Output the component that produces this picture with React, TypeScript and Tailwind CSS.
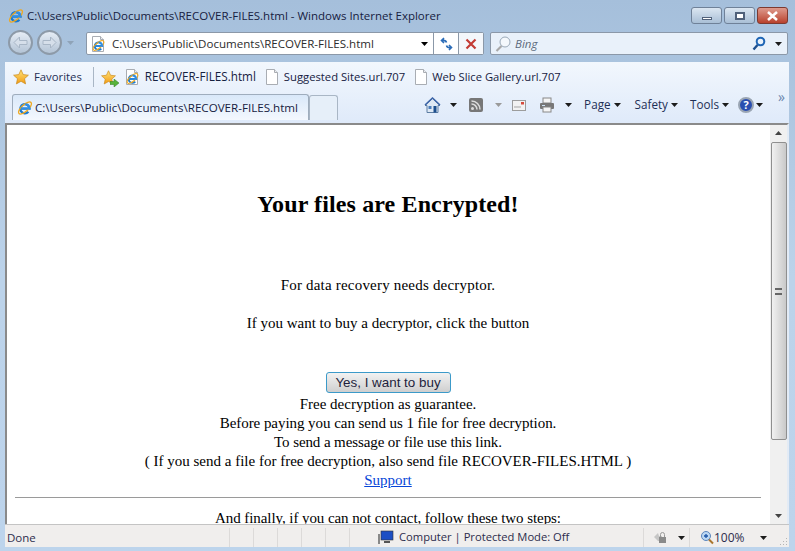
import React from 'react'

const IeLogo = ({ size = 16 }: { size?: number }) => (
  <svg width={size} height={size} viewBox="0 0 16 16" className="shrink-0">
    <path d="M3.800 8.600h8.700a4.600 4.600 0 1 0-1.100 3.200" fill="none" stroke="#1b7ad0" strokeWidth="2.300" />
    <ellipse cx="8" cy="8" rx="8.200" ry="3.300" transform="rotate(-42 8 8)" fill="none" stroke="#efa81f" strokeWidth="1.300" />
    <path d="M3.800 8.600h8.700a4.600 4.600 0 0 0-4.300-4.400" fill="none" stroke="#2f8fe6" strokeWidth="2" />
  </svg>
)

const PageIcon = ({ children }: { children?: React.ReactNode }) => (
  <span className="relative w-[14px] h-[16px] shrink-0">
    <svg width="14" height="16" viewBox="0 0 14 16">
      <path d="M1.500.5h8l3 3v12h-11z" fill="#fff" stroke="#a9adb3" />
      <path d="M9.500.5v3h3" fill="#eceef1" stroke="#a9adb3" />
    </svg>
    {children}
  </span>
)

const IePage = () => (
  <PageIcon>
    <span className="absolute left-[1px] top-[3px]"><IeLogo size={13} /></span>
  </PageIcon>
)

const Star = ({ size = 16 }: { size?: number }) => (
  <svg width={size} height={size} viewBox="0 0 16 16" className="shrink-0">
    <defs>
      <linearGradient id="starFill" x1="0" y1="0" x2="0" y2="1">
        <stop offset="0" stopColor="#ffe47a" />
        <stop offset="1" stopColor="#f29a12" />
      </linearGradient>
    </defs>
    <path d="M8 .8l2.200 4.800 5.200.6-3.900 3.500 1.100 5.200L8 12.300l-4.600 2.600 1.100-5.200L.6 6.200l5.200-.6z" fill="url(#starFill)" stroke="#c98a1d" strokeWidth=".7" />
  </svg>
)

const Caret = ({ color = '#1c1c1c' }: { color?: string }) => (
  <svg width="8" height="4" viewBox="0 0 8 4" className="shrink-0">
    <path d="M0 0h7L3.500 4z" fill={color} />
  </svg>
)

const NavCircle = ({ flip }: { flip?: boolean }) => (
  <span className="w-[25px] h-[25px] rounded-full border-2 border-[#8d9aa8] bg-gradient-to-b from-[#e6edf5] to-[#b4c4d6] flex items-center justify-center">
    <svg width="15" height="13" viewBox="0 0 15 13" style={flip ? { transform: 'scaleX(-1)' } : undefined}>
      <path d="M1 6.500L6.500 1v3.500H14v4H6.500V12z" fill="#d6dfea" stroke="#a8b6c6" />
    </svg>
  </span>
)

const MenuItem = ({ label }: { label: string }) => (
  <span className="flex items-center gap-[3px] text-[11.7px] text-[#1e2f55]">
    {label}
    <Caret />
  </span>
)

const App = () => {
  return (
    <div className="w-[795px] h-[551px] overflow-hidden flex flex-col bg-gradient-to-b from-[#a5bfdb] via-[#bcd3ea] to-[#bdd4ec] font-['Open_Sans','Noto_Sans',sans-serif] text-[11.5px] text-[#1e2f55]">
      {/* title bar */}
      <div className="h-[30px] shrink-0 pl-[8px] pr-[7px] flex items-start">
        <div className="flex items-center gap-[3px] pt-[8px]">
          <IeLogo />
          <span className="leading-[16px] text-[#16213f]">C:\Users\Public\Documents\RECOVER-FILES.html - Windows Internet Explorer</span>
        </div>
        <div className="ml-auto flex gap-[2px] pt-[7px]">
          <span className="w-[31px] h-[17px] rounded-[3px] border border-[#6f8198] bg-gradient-to-b from-[#dbe6f1] to-[#a9bfd6] flex items-end justify-center pb-[3px]">
            <span className="w-[10px] h-[3px] bg-white border border-[#50617a]" />
          </span>
          <span className="w-[31px] h-[17px] rounded-[3px] border border-[#6f8198] bg-gradient-to-b from-[#dbe6f1] to-[#a9bfd6] flex items-center justify-center">
            <span className="w-[10px] h-[8px] border-2 border-[#50617a] bg-white" />
          </span>
          <span className="w-[31px] h-[17px] rounded-[3px] border border-[#7d3a30] bg-gradient-to-b from-[#dd9a8d] to-[#b8402c] flex items-center justify-center">
            <svg width="13" height="10" viewBox="0 0 13 10"><path d="M2 1l9 8M11 1l-9 8" stroke="#fff" strokeWidth="2.600" /></svg>
          </span>
        </div>
      </div>

      {/* navigation row */}
      <div className="h-[32px] shrink-0 pl-[8px] pr-[7px] flex items-start">
        <NavCircle />
        <span className="ml-[4px]"><NavCircle flip /></span>
        <span className="ml-[5px] mt-[11px]"><Caret color="#8fa3b8" /></span>
        <div className="ml-[11px] mt-[2px] w-[398px] h-[23px] rounded-[2px] border border-[#8b98a8] bg-white flex items-center shrink-0">
          <span className="ml-[4px] flex"><IePage /></span>
          <span className="ml-[7px] text-[11.55px] text-[#2c2c2c]">C:\Users\Public\Documents\RECOVER-FILES.html</span>
          <span className="ml-auto w-[17px] flex justify-center"><Caret color="#000" /></span>
          <span className="w-[25px] h-full border-l border-[#8b98a8] flex items-center justify-center">
            <svg width="15" height="14" viewBox="0 0 15 14" fill="none" stroke="#2a6cb8" strokeWidth="1.600">
              <path d="M7.500 5.500C7 3.500 5.500 3 3 3.500M5 1L2.500 3.500 5 6" />
              <path d="M7.500 8.500C8 10.500 9.500 11 12 10.500M10 8l2.500 2.500L10 13" />
            </svg>
          </span>
          <span className="w-[25px] h-full border-l border-[#8b98a8] flex items-center justify-center bg-[#f4f7fb]">
            <svg width="12" height="12" viewBox="0 0 12 12"><path d="M1.500 1.500l9 9M10.500 1.500l-9 9" stroke="#c33b35" strokeWidth="2.200" /></svg>
          </span>
        </div>
        <div className="ml-[6px] mt-[2px] flex-1 h-[23px] rounded-[2px] border border-[#8b98a8] bg-[#e9f1fa] flex items-center pl-[4px] pr-[3px]">
          <svg width="16" height="18" viewBox="0 0 16 18" fill="none">
            <circle cx="10" cy="7" r="5" stroke="#9aa9b8" fill="#f4f8fc" />
            <path d="M6.500 11L1.500 16" stroke="#a8a8a8" strokeWidth="2.200" />
          </svg>
          <span className="ml-[4px] italic text-[#5c6a7c]">Bing</span>
          <svg width="14" height="15" viewBox="0 0 14 15" fill="none" className="ml-auto">
            <circle cx="8.500" cy="5.500" r="3.800" stroke="#1f66b5" strokeWidth="2" />
            <path d="M5.500 9L1.500 13.500" stroke="#1d4f8e" strokeWidth="2.400" />
          </svg>
          <span className="ml-[9px] mr-[1px]"><Caret /></span>
        </div>
      </div>

      {/* command area */}
      <div className="h-[61px] shrink-0 ml-[5px] mr-[6px] bg-gradient-to-b from-[#f2f7fd] to-[#dfeafa] flex flex-col">
        <div className="h-[30px] shrink-0 flex items-center pl-[8px]">
          <Star />
          <span className="ml-[5px] text-[11.3px] text-[#1e2f55]">Favorites</span>
          <span className="ml-[11px] w-px h-[20px] bg-[#a9b6c5]" />
          <span className="ml-[7px] relative flex">
            <Star size={15} />
            <svg width="9" height="8" viewBox="0 0 9 8" className="absolute left-[9px] top-[9px]">
              <path d="M0 2.500h4V0l5 4-5 4V5.500H0z" fill="#58b33b" stroke="#2f7d21" strokeWidth=".5" />
            </svg>
          </span>
          <span className="ml-[9px] flex"><IePage /></span>
          <span className="ml-[6px] text-[11.7px] text-[#16213f]">RECOVER-FILES.html</span>
          <span className="ml-[9px] flex"><PageIcon /></span>
          <span className="ml-[5px] text-[11.25px] text-[#16213f]">Suggested Sites.url.707</span>
          <span className="ml-[9px] flex"><PageIcon /></span>
          <span className="ml-[4px] text-[11.2px] text-[#16213f]">Web Slice Gallery.url.707</span>
        </div>
        <div className="flex-1 flex items-start pl-[7px] pb-[3px]">
          <div className="w-[297px] h-[26px] mt-[2px] rounded-t-[3px] border border-b-0 border-[#9fadbd] bg-gradient-to-b from-[#d9e8f9] to-[#f4f8fe] flex items-center pl-[4px] gap-[2px]">
            <IeLogo />
            <span className="text-[11.6px] text-[#16213f]">C:\Users\Public\Documents\RECOVER-FILES.html</span>
          </div>
          <div className="w-[29px] h-[25px] mt-[3px] rounded-t-[3px] border border-b-0 border-[#a9b6c5] bg-[#e6eff9]" />
          <div className="ml-auto flex items-center h-[26px] pr-[25px] relative">
            <svg width="17" height="17" viewBox="0 0 17 17" className="mr-[9px]">
              <path d="M1 8.500L8.500 1.500 16 8.500h-2v7H3v-7z" fill="#dfe9f4" stroke="#5c7da3" />
              <path d="M1 8L8.500 1 16 8" fill="none" stroke="#3d65a8" strokeWidth="1.500" />
              <rect x="9.500" y="9" width="3" height="6.500" fill="#1d4f8e" />
              <rect x="4.500" y="9" width="3" height="3" fill="#4b7cba" />
            </svg>
            <Caret />
            <svg width="14" height="14" viewBox="0 0 14 14" className="ml-[11px]">
              <rect width="14" height="14" rx="2" fill="#777" />
              <circle cx="3.500" cy="10.500" r="1.500" fill="#ddd" />
              <path d="M2.500 6a5.500 5.500 0 0 1 5.500 5.500M2.500 3a8.500 8.500 0 0 1 8.500 8.500" fill="none" stroke="#ddd" strokeWidth="1.500" />
            </svg>
            <span className="ml-[12px]"><Caret color="#9a9a9a" /></span>
            <svg width="14" height="11" viewBox="0 0 14 11" className="ml-[9px]">
              <rect x=".5" y=".5" width="13" height="10" fill="#f2f2f2" stroke="#9c9c9c" />
              <rect x="9" y="2" width="3" height="2.500" fill="#d64a3c" />
              <path d="M2 7h7" stroke="#a5a5a5" />
            </svg>
            <svg width="16" height="16" viewBox="0 0 16 16" className="ml-[13px]">
              <rect x="4" y="1" width="8" height="5" fill="#f5f5f5" stroke="#888" />
              <rect x="1" y="6" width="14" height="6" rx="1" fill="#777" />
              <rect x="4" y="10" width="8" height="5" fill="#f5f5f5" stroke="#888" />
              <rect x="3" y="8" width="3" height="1" fill="#cfe3f5" />
            </svg>
            <span className="ml-[10px]"><Caret /></span>
            <span className="ml-[11px]"><MenuItem label="Page" /></span>
            <span className="ml-[13px]"><MenuItem label="Safety" /></span>
            <span className="ml-[11px]"><MenuItem label="Tools" /></span>
            <span className="ml-[8px] w-[16px] h-[16px] rounded-full border-2 border-[#9aa5b3] bg-[#2a4fb0] text-white text-[11px] leading-[12px] font-bold text-center">?</span>
            <span className="ml-[2px]"><Caret /></span>
            <span className="absolute right-[4px] top-[-1px] text-[14px] leading-[12px] text-[#6a85ad]">»</span>
          </div>
        </div>
      </div>

      {/* page */}
      <div className="flex-1 min-h-0 ml-[5px] mr-[6px] border-t-2 border-l-2 border-r-2 border-t-[#8a8a8a] border-l-[#8a8a8a] border-r-[#e3ebf5] bg-white flex overflow-hidden">
        <div className="flex-1 min-w-0 pl-[8px] pr-[9px] text-center font-['Liberation_Serif',serif] text-[15px] leading-[19px] text-black">
          <h1 className="mt-[66px] text-[24px] leading-[27px] font-bold tracking-[0.12px]">Your files are Encrypted!</h1>
          <p className="mt-[58px] tracking-[0.2px]">For data recovery needs decryptor.</p>
          <p className="mt-[19px]">If you want to buy a decryptor, click the button</p>
          <button className="mt-[39px] block mx-auto w-[125px] h-[21px] rounded-[3px] border border-[#3c9ac9] bg-gradient-to-b from-[#f2f2f2] to-[#cfcfcf] font-['Liberation_Sans',sans-serif] text-[13.4px] leading-[18px] text-[#1e1e3c]">Yes, I want to buy</button>
          <p className="mt-[2px]">Free decryption as guarantee.</p>
          <p className="tracking-[-0.05px]">Before paying you can send us 1 file for free decryption.</p>
          <p className="tracking-[-0.1px]">To send a message or file use this link.</p>
          <p>( If you send a file for free decryption, also send file RECOVER-FILES.HTML )</p>
          <a className="text-[#0645d8] underline">Support</a>
          <hr className="mt-[7px] border-[#9a9a9a]" />
          <p className="mt-[11px] tracking-[-0.08px]">And finally, if you can not contact, follow these two steps:</p>
        </div>
        <div className="w-[17px] shrink-0 bg-[#f0f0f0] flex flex-col items-center">
          <div className="h-[17px] w-full flex items-center justify-center rotate-180"><Caret color="#444" /></div>
          <div className="w-[16px] h-[298px] rounded-[2px] border border-[#8f8f8f] bg-gradient-to-r from-[#f1f1f1] to-[#c9c9c9] flex items-center justify-center">
            <span className="w-[7px] h-[7px] border-y-2 border-[#666]" />
          </div>
          <div className="mt-auto h-[17px] w-full flex items-center justify-center"><Caret color="#444" /></div>
        </div>
      </div>

      {/* status bar */}
      <div className="h-[23px] shrink-0 ml-[5px] mr-[6px] border-t border-[#c4c4c4] bg-[#f0eeed] pt-[3px] flex items-center text-[#2c2c4c] relative">
        <span className="ml-[2px] w-[222px]">Done</span>
        <span className="w-[24px] h-full border-l border-[#dcdad9]" />
        <span className="w-[24px] h-full border-l border-[#dcdad9]" />
        <span className="w-[24px] h-full border-l border-[#dcdad9]" />
        <span className="w-[24px] h-full border-l border-[#dcdad9]" />
        <span className="w-[24px] h-full border-l border-[#dcdad9]" />
        <span className="w-[29px] h-full border-l border-[#dcdad9]" />
        <svg width="16" height="15" viewBox="0 0 16 15" className="shrink-0">
          <rect x="3" y="1" width="12" height="9" fill="#1c4fc4" stroke="#333" strokeWidth=".6" />
          <rect x="6" y="11" width="6" height="2" fill="#555" />
          <rect x="0" y="4" width="2" height="10" fill="#888" />
        </svg>
        <span className="ml-[5px] text-[11.2px]">Computer | Protected Mode: Off</span>
        <span className="ml-auto h-full border-l border-[#dcdad9] pl-[9px] flex items-center w-[46px]">
          <svg width="15" height="15" viewBox="0 0 15 15" className="shrink-0">
            <path d="M1 7l4-4 1 3 3 0v5H5z" fill="#c6c6c6" />
            <rect x="6" y="7" width="7" height="6" fill="#8a8a8a" />
            <path d="M7.500 7V4.500a2 2 0 0 1 4 0V7" fill="none" stroke="#9a9a9a" />
          </svg>
          <span className="ml-[10px]"><Caret /></span>
        </span>
        <span className="h-full border-l border-[#dcdad9] pl-[10px] flex items-center w-[100px]">
          <svg width="14" height="15" viewBox="0 0 14 15" fill="none" className="shrink-0">
            <circle cx="6" cy="6" r="4.500" fill="#bcd7f2" stroke="#5b86bd" />
            <path d="M4 6h4M6 4v4" stroke="#1d56a8" strokeWidth="1.300" />
            <path d="M9 9.500l4 4" stroke="#a9762e" strokeWidth="2" />
          </svg>
          <span className="text-[12px]">100%</span>
          <span className="ml-[15px]"><Caret /></span>
        </span>
        <svg width="8" height="8" viewBox="0 0 8 8" className="absolute right-[1px] bottom-[1px]" fill="#b5b5b5">
          <rect x="6" y="0" width="1" height="1" />
          <rect x="3" y="3" width="1" height="1" />
          <rect x="6" y="3" width="1" height="1" />
          <rect x="0" y="6" width="1" height="1" />
          <rect x="3" y="6" width="1" height="1" />
          <rect x="6" y="6" width="1" height="1" />
        </svg>
      </div>
      <div className="h-[4px] shrink-0" />
    </div>
  )
}

export default App
